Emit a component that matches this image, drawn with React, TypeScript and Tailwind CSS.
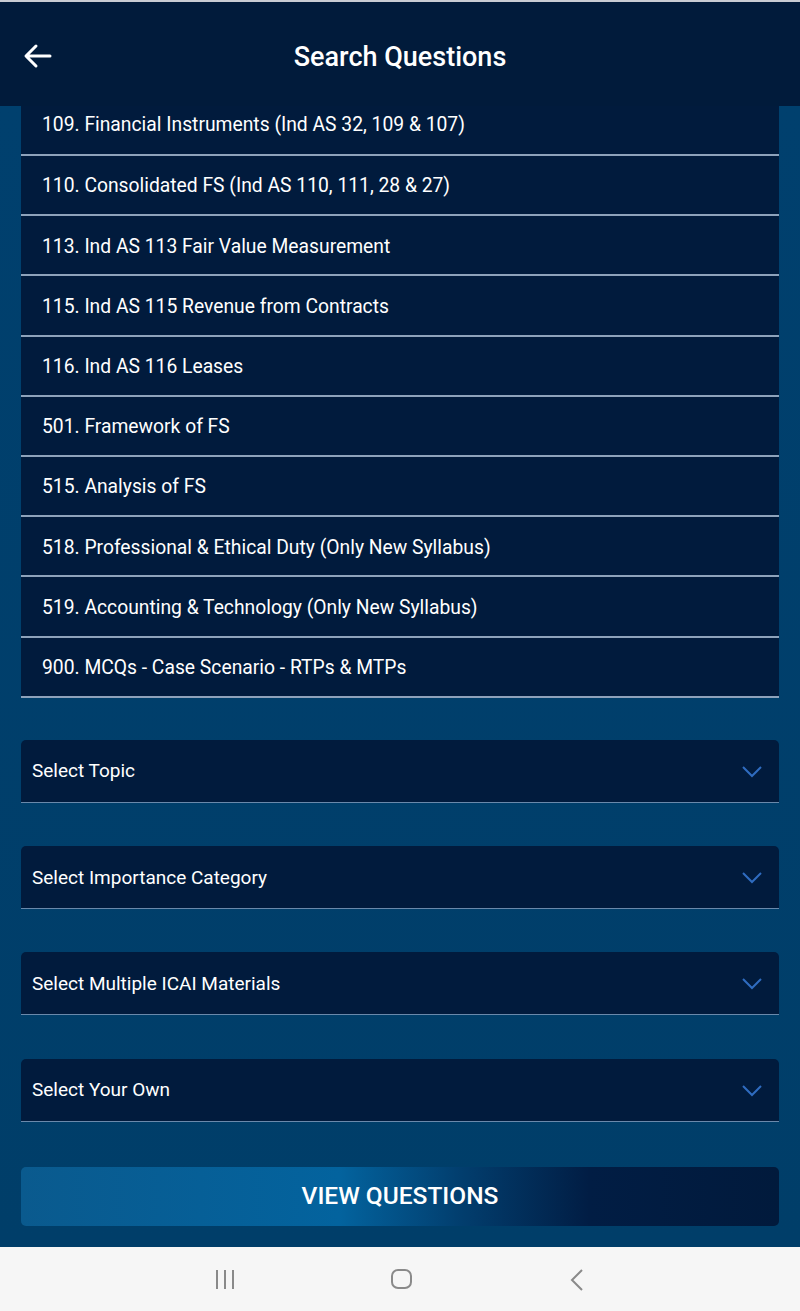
import React from "react";

const items = [
  "110. Consolidated FS (Ind AS 110, 111, 28 & 27)",
  "113. Ind AS 113 Fair Value Measurement",
  "115. Ind AS 115 Revenue from Contracts",
  "116. Ind AS 116 Leases",
  "501. Framework of FS",
  "515. Analysis of FS",
  "518. Professional & Ethical Duty (Only New Syllabus)",
  "519. Accounting & Technology (Only New Syllabus)",
  "900. MCQs - Case Scenario - RTPs & MTPs",
];

const selects = [
  "Select Topic",
  "Select Importance Category",
  "Select Multiple ICAI Materials",
  "Select Your Own",
];

function Chevron() {
  return (
    <svg width="22" height="14" viewBox="0 0 22 14" fill="none">
      <path d="M2 2 L11 11 L20 2" stroke="#2f6cc0" strokeWidth="2" />
    </svg>
  );
}

export default function App() {
  return (
    <div
      className="w-[800px] h-[1311px] flex flex-col overflow-hidden bg-[#003f6a]"
      style={{ fontFamily: "Roboto, 'Noto Sans', sans-serif" }}
    >
      <div className="h-[2px] bg-[#c9ccd3]" />
      <div className="h-[104px] bg-[#011b3b] flex items-center relative shrink-0">
        <div className="pl-[22px] pt-[4px]">
          <svg width="32" height="28" viewBox="0 0 32 28" fill="none">
            <path d="M28 14 H5 M14 4 L4 14 L14 24" stroke="white" strokeWidth="3" strokeLinecap="round" strokeLinejoin="round" />
          </svg>
        </div>
        <div className="absolute inset-0 flex items-center justify-center pt-[6px]">
          <span className="text-white text-[27px] font-medium">Search Questions</span>
        </div>
      </div>

      <div className="flex-1 flex flex-col bg-gradient-to-b from-[#00406e] to-[#003e69]">
        <div className="mx-[21px] flex flex-col">
          <div className="h-[48px] bg-[#011b3d] flex items-start">
            <span className="text-white text-[19.3px] pl-[21px] mt-[5px] leading-[28px]">
              109. Financial Instruments (Ind AS 32, 109 &amp; 107)
            </span>
          </div>
          <div className="h-[2px] bg-[#8ea2bb]" />
          {items.map((t) => (
            <React.Fragment key={t}>
              <div className="h-[58.2px] bg-[#011b3d] flex items-center pt-[2px]">
                <span className="text-white text-[19.3px] pl-[21px] leading-none">{t}</span>
              </div>
              <div className="h-[2px] bg-[#8ea2bb]" />
            </React.Fragment>
          ))}
        </div>

        <div className="mx-[21px] mt-[42px] flex flex-col gap-[43.3px]">
          {selects.map((s) => (
            <div
              key={s}
              className="h-[63px] bg-[#011b3d] rounded-t-[5px] border-b border-[#6a89ab] flex items-center justify-between pl-[11px] pr-[16px] pt-[2px]"
            >
              <span className="text-white text-[19px]">{s}</span>
              <Chevron />
            </div>
          ))}
        </div>

        <div className="mx-[21px] mt-[45px] h-[59px] rounded-[5px] flex items-center justify-center bg-[linear-gradient(90deg,#0a5a8e_0%,#03639e_42%,#023e6e_58%,#011d44_75%,#011a3c_100%)]">
          <span className="text-white text-[24.5px] font-medium">VIEW QUESTIONS</span>
        </div>
        <div className="flex-1" />
      </div>

      <div className="h-[64px] bg-[#f6f6f6] shrink-0 flex items-center justify-center relative">
        <div className="absolute left-[216px] top-[23px] flex gap-[6px]">
          <div className="w-[2px] h-[19px] bg-[#8a8a8a]" />
          <div className="w-[2px] h-[19px] bg-[#8a8a8a]" />
          <div className="w-[2px] h-[19px] bg-[#8a8a8a]" />
        </div>
        <div className="absolute left-[391px] top-[22px] w-[21px] h-[20px] border-[2px] border-[#8a8a8a] rounded-[7px]" />
        <svg className="absolute left-[569px] top-[22px]" width="16" height="22" viewBox="0 0 16 22" fill="none">
          <path d="M13 1 L3 11 L13 21" stroke="#8a8a8a" strokeWidth="2" />
        </svg>
      </div>
    </div>
  );
}
